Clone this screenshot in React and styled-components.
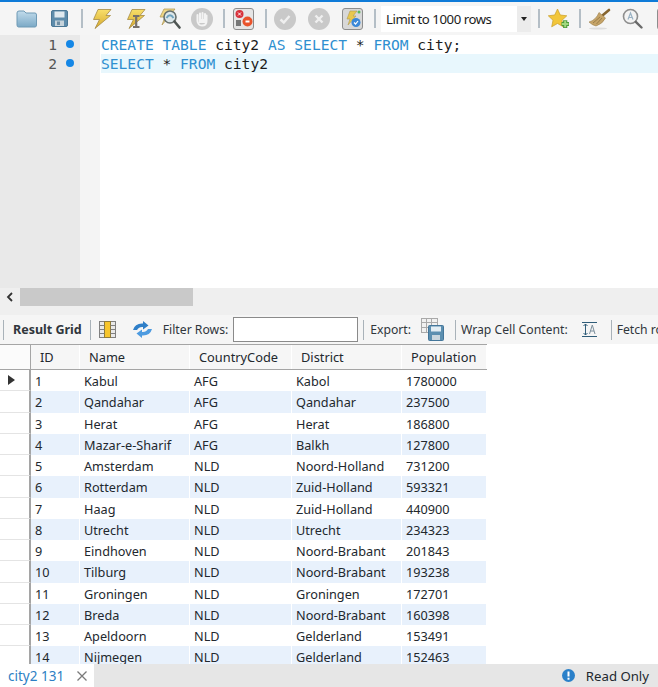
import React from "react";
import styled, { createGlobalStyle } from "styled-components";

const GlobalStyle = createGlobalStyle`
  html, body {
    margin: 0;
    padding: 0;
    background: #ffffff;
  }
`;

const uiFont = `"Noto Sans", "DejaVu Sans", sans-serif`;

const Page = styled.div`
  width: 658px;
  height: 687px;
  display: flex;
  flex-direction: column;
  overflow: hidden;
  font-family: ${uiFont};
  font-size: 13px;
  color: #1c1c1c;
`;

const TopToolbar = styled.div`
  height: 33px;
  flex: none;
  display: flex;
  align-items: center;
  padding-left: 16px;
  background: #f5f5f5;
  border-top: 2px solid #0f7bd8;
  overflow: hidden;
`;

const Slot = styled.span`
  flex: none;
  display: flex;
  margin-left: ${(p) => p.$left || 0}px;
`;

const ToolSep = styled.span`
  flex: none;
  width: 2px;
  height: 19px;
  margin-left: ${(p) => p.$left || 0}px;
  background: #b4bec6;
`;

const LimitSelect = styled.div`
  flex: none;
  width: 150px;
  height: 26px;
  margin-left: 5px;
  display: flex;
  align-items: center;
  justify-content: space-between;
  background: #ffffff;
  font-size: 13.2px;
  letter-spacing: -0.45px;
  padding-left: 5px;
  box-sizing: border-box;
`;

const SelectArrow = styled.span`
  width: 14px;
  height: 100%;
  display: flex;
  align-items: center;
  justify-content: center;
  background: #ececec;
  &::after {
    content: "";
    border-left: 3.5px solid transparent;
    border-right: 3.5px solid transparent;
    border-top: 4px solid #222;
  }
`;

const Editor = styled.div`
  height: 253px;
  flex: none;
  display: flex;
  background: #ffffff;
`;

const Gutter = styled.div`
  width: 80px;
  flex: none;
  background: #e9e9e9;
`;

const LineNumber = styled.div`
  height: 19px;
  display: flex;
  align-items: center;
  justify-content: flex-end;
  gap: 9px;
  padding-right: 6px;
  font-family: "DejaVu Sans Mono", monospace;
  font-size: 14.6px;
  color: #555;
`;

const Marker = styled.span`
  width: 8px;
  height: 8px;
  border-radius: 50%;
  background: #1587e6;
  position: relative;
  top: -1px;
`;

const FoldMargin = styled.div`
  width: 20px;
  flex: none;
  background-color: #f4f4f4;
`;

const Code = styled.div`
  flex: 1;
  padding-left: 1px;
`;

const CodeLine = styled.div`
  height: 19px;
  line-height: 19px;
  font-family: "DejaVu Sans Mono", monospace;
  font-size: 14.6px;
  white-space: pre;
  color: #1c1c1c;
  background: ${(p) => (p.$current ? "#e8f7fd" : "transparent")};
`;

const Keyword = styled.span`
  color: #2f8fd0;
`;

const ScrollArea = styled.div`
  height: 27px;
  flex: none;
  background: #efefef;
`;

const ScrollTrack = styled.div`
  height: 18px;
  display: flex;
  align-items: stretch;
`;

const ScrollButton = styled.span`
  width: 20px;
  display: flex;
  align-items: center;
  justify-content: center;
`;

const ScrollThumb = styled.span`
  width: 173px;
  background: #c9c9c9;
`;

const ResultToolbar = styled.div`
  height: 29px;
  flex: none;
  display: flex;
  align-items: center;
  background: #f5f5f5;
  white-space: nowrap;
  overflow: hidden;
`;

const BarSep = styled.span`
  flex: none;
  width: 1px;
  height: 20px;
  margin-left: ${(p) => p.$left || 0}px;
  background: #a9b2b9;
`;

const BarLabel = styled.span`
  flex: none;
  margin-left: ${(p) => p.$left || 0}px;
  font-size: ${(p) => (p.$bold ? 12.5 : 12.2)}px;
  font-weight: ${(p) => (p.$bold ? 700 : 400)};
  color: #30363c;
`;

const FilterInput = styled.span`
  flex: none;
  width: 123px;
  height: 23px;
  margin-left: 5px;
  background: #ffffff;
  border: 1px solid #8a8a8a;
`;

const Results = styled.div`
  flex: 1;
  min-height: 0;
  overflow: hidden;
  display: grid;
  grid-template-columns: 31px 456px;
  grid-template-rows: 26px;
  grid-auto-rows: 21.25px;
  justify-content: start;
`;

const Corner = styled.div`
  border-top: 1px solid #a5a5a5;
  border-bottom: 1px solid #a5a5a5;
  border-right: 1px solid #a5a5a5;
  box-sizing: border-box;
  background: #fbfbfb;
`;

const RowHead = styled.div`
  box-sizing: border-box;
  border-right: 2px solid #a5a5a5;
  border-bottom: 1px solid #e4e4e4;
  display: flex;
  align-items: center;
  padding-left: 8px;
  background: #ffffff;
`;

const CurrentArrow = styled.span`
  border-left: 7px solid #333;
  border-top: 5.5px solid transparent;
  border-bottom: 5.5px solid transparent;
`;

const Columns = styled.div`
  width: 456px;
  display: grid;
  grid-template-columns: 49px 110px 102px 110px 85px;
  align-items: stretch;
`;

const HeadRow = styled(Columns)`
  box-sizing: border-box;
  border-top: 1px solid #a5a5a5;
  border-bottom: 1px solid #a5a5a5;
  background: #f6f6f6;
`;

const HeadCell = styled.div`
  display: flex;
  align-items: center;
  padding-left: 9px;
  border-right: 1px solid #ffffff;
  font-size: 12.8px;
  color: #22282e;
`;

const DataRow = styled(Columns)`
  line-height: 22.5px;
`;

const DataCell = styled.div`
  padding-left: 4px;
  border-right: 1px solid #ffffff;
  white-space: nowrap;
  overflow: hidden;
  font-size: 12.7px;
  color: #22282e;
  background: ${(p) => (p.$odd ? "#e8f1fc" : "#ffffff")};
`;

const TabBar = styled.div`
  height: 23px;
  flex: none;
  display: flex;
  align-items: center;
  background: #e6e6e6;
`;

const Tab = styled.div`
  width: 94px;
  height: 100%;
  box-sizing: border-box;
  padding-left: 8px;
  display: flex;
  align-items: center;
  gap: 13px;
  background: #ffffff;
  font-size: 13.5px;
  color: #2d7fc4;
`;

const ReadOnly = styled.div`
  margin-left: auto;
  padding-right: 9px;
  display: flex;
  align-items: center;
  gap: 11px;
  font-size: 13.2px;
  color: #22282e;
`;

const Bolt = ({ id }) => (
  <>
    <defs>
      <linearGradient id={id} x1="0" y1="0" x2="0" y2="1">
        <stop offset="0" stopColor="#f8df6a" />
        <stop offset="1" stopColor="#d6a92c" />
      </linearGradient>
    </defs>
    <path d="M6 0.500 L19 0.500 L14 6.500 L18.500 6.500 L3 19.500 L7.500 10.500 L1.500 10.500 Z" fill={`url(#${id})`} stroke="#a58a45" strokeWidth="0.8" />
  </>
);

const Folder = () => (
  <svg width="21" height="18" viewBox="0 0 21 18">
    <defs>
      <linearGradient id="fold" x1="0" y1="0" x2="0" y2="1">
        <stop offset="0" stopColor="#c2dcec" />
        <stop offset="1" stopColor="#7ba9c6" />
      </linearGradient>
    </defs>
    <path d="M1 3 Q1 1 3 1 L8 1 L10 3 L19 3 Q20.500 3 20.500 5 L20.500 15 Q20.500 17 19 17 L2.500 17 Q1 17 1 15 Z" fill="url(#fold)" stroke="#6f9ab5" />
  </svg>
);

const Save = () => (
  <svg width="17" height="17" viewBox="0 0 17 17">
    <rect x="0.500" y="0.500" width="16" height="16" rx="1.500" fill="#5e8cab" stroke="#4a7795" />
    <rect x="3.500" y="1.500" width="10" height="6" fill="#dfe9ef" />
    <rect x="4" y="10.500" width="9" height="5.500" fill="#c6d3db" />
    <rect x="6" y="11.500" width="3" height="3.500" fill="#6f8ea3" />
  </svg>
);

const RunAll = () => (
  <svg width="20" height="20" viewBox="0 0 20 20">
    <Bolt id="bolt-a" />
  </svg>
);

const RunLine = () => (
  <svg width="20" height="20" viewBox="0 0 20 20">
    <Bolt id="bolt-b" />
    <path d="M7 7 H13.500 M10.200 7 V18 M7 18 H13.500" stroke="#77706a" strokeWidth="2.200" fill="none" />
  </svg>
);

const Explain = () => (
  <svg width="23" height="22" viewBox="0 0 23 22">
    <path d="M6 1 L17 1 L13 6 L4 17 L7 9 L2 9 Z" fill="#efd785" stroke="#b39c58" strokeWidth="0.8" />
    <circle cx="12" cy="9" r="6" fill="#dce7ea" stroke="#66706f" strokeWidth="1.600" />
    <path d="M8.500 10 Q12 4.500 15.500 10" stroke="#6fa2bd" strokeWidth="2" fill="none" />
    <path d="M16.500 13.500 L21.500 19.500" stroke="#4f5654" strokeWidth="2.600" strokeLinecap="round" />
  </svg>
);

const Hand = () => (
  <svg width="22" height="22" viewBox="0 0 22 22">
    <circle cx="11" cy="11" r="11" fill="#c9c9c9" />
    <path d="M6.500 9.500 V13 Q7 17.500 11 17.500 Q15.500 17.500 15.500 13 V7.500 M6.500 9.500 V7 M9 11 V5.500 M11.500 11 V5 M14 11 V6" stroke="#f3f3f3" strokeWidth="2" strokeLinecap="round" fill="none" />
    <path d="M8 11 H15 V15 H8 Z" fill="#f3f3f3" />
  </svg>
);

const StopBox = () => (
  <svg width="21" height="22" viewBox="0 0 21 22">
    <rect x="0.500" y="0.500" width="20" height="21" rx="2.500" fill="#e5e5e5" stroke="#8d8d8d" />
    <circle cx="6.500" cy="6" r="4" fill="#d8303a" />
    <path d="M5 4.500 L8 7.500 M8 4.500 L5 7.500" stroke="#fff" strokeWidth="1" />
    <rect x="3" y="12" width="5" height="6" fill="#777" />
    <circle cx="14.500" cy="13.500" r="5" fill="#e9532b" />
    <rect x="12.500" y="12.500" width="4" height="2" fill="#fff" />
  </svg>
);

const CheckCircle = () => (
  <svg width="22" height="22" viewBox="0 0 22 22">
    <circle cx="11" cy="11" r="11" fill="#c9c9c9" />
    <path d="M6.500 11.500 L9.800 14.500 L15.500 8" stroke="#efefef" strokeWidth="2.400" fill="none" />
  </svg>
);

const CrossCircle = () => (
  <svg width="22" height="22" viewBox="0 0 22 22">
    <circle cx="11" cy="11" r="11" fill="#c9c9c9" />
    <path d="M7.500 7.500 L14.500 14.500 M14.500 7.500 L7.500 14.500" stroke="#efefef" strokeWidth="2.400" />
  </svg>
);

const AutoCommit = () => (
  <svg width="21" height="22" viewBox="0 0 21 22">
    <rect x="0.500" y="0.500" width="20" height="21" rx="2.500" fill="#d8d8d8" stroke="#8d8d8d" />
    <path d="M8 3 L15 3 L11 8 L14 8 L6 17 L8 11 L5 11 Z" fill="#e9c84e" stroke="#b09a50" strokeWidth="0.600" />
    <circle cx="14" cy="14.500" r="4.500" fill="#3b88d8" />
    <path d="M12 14.500 L13.600 16 L16 13" stroke="#fff" strokeWidth="1.200" fill="none" />
    <circle cx="17" cy="4" r="1.500" fill="#5cb85c" />
  </svg>
);

const Star = () => (
  <svg width="22" height="22" viewBox="0 0 22 22">
    <path d="M9.500 1 L12.300 7 L18.800 7.800 L14 12.300 L15.300 18.800 L9.500 15.500 L3.700 18.800 L5 12.300 L0.300 7.800 L6.700 7 Z" fill="#f2c63a" stroke="#c99e27" strokeWidth="0.700" />
    <path d="M13.500 16 H21 M17.200 12.200 V20" stroke="#4e9c3c" strokeWidth="4.200" />
    <path d="M14 16 H20.500 M17.200 12.800 V19.300" stroke="#a2d87f" strokeWidth="2" />
  </svg>
);

const Broom = () => (
  <svg width="23" height="22" viewBox="0 0 23 22">
    <path d="M15 7 L21 2" stroke="#86652f" strokeWidth="2.600" strokeLinecap="round" />
    <path d="M11 4.500 L17.500 10 Q14.500 16 8 18 Q4 17 1 14 Q8 12 11 4.500 Z" fill="#c6a468" stroke="#9b7f4b" strokeWidth="0.600" />
    <path d="M5 15 L12 9 M8.500 16 L14 10" stroke="#8f7443" strokeWidth="0.800" />
    <ellipse cx="10" cy="20.500" rx="9" ry="1" fill="#dddddd" />
  </svg>
);

const FindIcon = () => (
  <svg width="21" height="21" viewBox="0 0 21 21">
    <circle cx="8.500" cy="8.500" r="7" fill="#f3f3f3" stroke="#8e8e8e" strokeWidth="1.600" />
    <path d="M6 11.500 L8.500 5 L11 11.500 M7 9.500 H10" stroke="#9ab2c4" strokeWidth="1.200" fill="none" />
    <path d="M13.800 13.800 L19.500 19.500" stroke="#6a6a6a" strokeWidth="2.400" strokeLinecap="round" />
  </svg>
);

const EdgeBox = () => (
  <svg width="21" height="22" viewBox="0 0 21 22">
    <rect x="0.500" y="0.500" width="20" height="21" rx="2.500" fill="#e5e5e5" stroke="#8d8d8d" />
  </svg>
);

const GridIcon = () => (
  <svg width="17" height="17" viewBox="0 0 17 17">
    <rect x="0.500" y="0.500" width="16" height="16" fill="#e9e9e9" stroke="#808080" />
    <rect x="5.500" y="0.500" width="6" height="16" fill="#f7c52b" stroke="#8f7b3a" />
    <path d="M0.500 4.500 H5.500 M0.500 8.500 H5.500 M0.500 12.500 H5.500 M11.500 4.500 H16.500 M11.500 8.500 H16.500 M11.500 12.500 H16.500" stroke="#808080" />
  </svg>
);

const RefreshIcon = () => (
  <svg width="21" height="17" viewBox="0 0 21 17">
    <path d="M1 9 Q3 2 11 2.500 L11 0 L16.500 4.500 L11 8.500 L11 6 Q7 5.500 5 9 Z" fill="#2f7fc8" />
    <path d="M20 8 Q18 15 10 14.500 L10 17 L4.500 12.500 L10 8.500 L10 11 Q14 11.500 16 8 Z" fill="#4d9be0" />
  </svg>
);

const ExportIcon = () => (
  <svg width="23" height="23" viewBox="0 0 23 23">
    <rect x="0.500" y="0.500" width="16" height="14" fill="#f1f1f1" stroke="#a9a9a9" />
    <path d="M0.500 4.500 H16.500 M0.500 9.500 H16.500 M5.500 0.500 V14.500 M10.500 0.500 V14.500" stroke="#a9a9a9" />
    <rect x="7.500" y="7.500" width="15" height="15" rx="1" fill="#5c8fb0" stroke="#44769a" />
    <rect x="10" y="8.500" width="10" height="5" fill="#e3edf3" />
    <rect x="11" y="17" width="8" height="5" fill="#c9d6de" />
  </svg>
);

const WrapIcon = () => (
  <svg width="15" height="15" viewBox="0 0 15 15">
    <path d="M0 0.500 H15 M0 14.500 H15" stroke="#2f5c78" />
    <path d="M3.500 2 V13 M1.500 4 L3.500 2 L5.500 4 M1.500 11 L3.500 13 L5.500 11" stroke="#2f5c78" fill="none" />
    <path d="M7.500 12 L10.300 3 L13 12 M8.500 9 H12" stroke="#7c8f9c" fill="none" />
  </svg>
);

const CloseIcon = () => (
  <svg width="10" height="10" viewBox="0 0 10 10">
    <path d="M0.500 0.500 L9.500 9.500 M9.500 0.500 L0.500 9.500" stroke="#7a7a7a" strokeWidth="1.300" />
  </svg>
);

const InfoIcon = () => (
  <svg width="13" height="13" viewBox="0 0 13 13">
    <circle cx="6.500" cy="6.500" r="6.500" fill="#2a80c9" />
    <rect x="5.500" y="2.500" width="2" height="5" fill="#fff" />
    <rect x="5.500" y="8.700" width="2" height="2" fill="#fff" />
  </svg>
);

const ChevronLeft = () => (
  <svg width="8" height="10" viewBox="0 0 8 10">
    <path d="M6 1 L2 5 L6 9" stroke="#333" strokeWidth="1.800" fill="none" />
  </svg>
);

const cities = [
  [1, "Kabul", "AFG", "Kabol", 1780000],
  [2, "Qandahar", "AFG", "Qandahar", 237500],
  [3, "Herat", "AFG", "Herat", 186800],
  [4, "Mazar-e-Sharif", "AFG", "Balkh", 127800],
  [5, "Amsterdam", "NLD", "Noord-Holland", 731200],
  [6, "Rotterdam", "NLD", "Zuid-Holland", 593321],
  [7, "Haag", "NLD", "Zuid-Holland", 440900],
  [8, "Utrecht", "NLD", "Utrecht", 234323],
  [9, "Eindhoven", "NLD", "Noord-Brabant", 201843],
  [10, "Tilburg", "NLD", "Noord-Brabant", 193238],
  [11, "Groningen", "NLD", "Groningen", 172701],
  [12, "Breda", "NLD", "Noord-Brabant", 160398],
  [13, "Apeldoorn", "NLD", "Gelderland", 153491],
  [14, "Nijmegen", "NLD", "Gelderland", 152463],
];

const headers = ["ID", "Name", "CountryCode", "District", "Population"];

export default function App() {
  return (
    <Page>
      <GlobalStyle />
      <TopToolbar>
        <Slot><Folder /></Slot>
        <Slot $left={14}><Save /></Slot>
        <ToolSep $left={13} />
        <Slot $left={9}><RunAll /></Slot>
        <Slot $left={14}><RunLine /></Slot>
        <Slot $left={12}><Explain /></Slot>
        <Slot $left={10}><Hand /></Slot>
        <ToolSep $left={10} />
        <Slot $left={8}><StopBox /></Slot>
        <ToolSep $left={11} />
        <Slot $left={7}><CheckCircle /></Slot>
        <Slot $left={12}><CrossCircle /></Slot>
        <Slot $left={12}><AutoCommit /></Slot>
        <ToolSep $left={11} />
        <LimitSelect>
          Limit to 1000 rows
          <SelectArrow />
        </LimitSelect>
        <ToolSep $left={7} />
        <Slot $left={8}><Star /></Slot>
        <ToolSep $left={9} />
        <Slot $left={7}><Broom /></Slot>
        <Slot $left={11}><FindIcon /></Slot>
        <Slot $left={14}><EdgeBox /></Slot>
      </TopToolbar>

      <Editor>
        <Gutter>
          <LineNumber>1<Marker /></LineNumber>
          <LineNumber>2<Marker /></LineNumber>
        </Gutter>
        <FoldMargin />
        <Code>
          <CodeLine>
            <Keyword>CREATE TABLE</Keyword> city2 <Keyword>AS SELECT</Keyword> * <Keyword>FROM</Keyword> city;
          </CodeLine>
          <CodeLine $current>
            <Keyword>SELECT</Keyword> * <Keyword>FROM</Keyword> city2
          </CodeLine>
        </Code>
      </Editor>

      <ScrollArea>
        <ScrollTrack>
          <ScrollButton><ChevronLeft /></ScrollButton>
          <ScrollThumb />
        </ScrollTrack>
      </ScrollArea>

      <ResultToolbar>
        <BarSep $left={3} />
        <BarLabel $bold $left={9}>Result Grid</BarLabel>
        <BarSep $left={8} />
        <Slot $left={8}><GridIcon /></Slot>
        <Slot $left={16}><RefreshIcon /></Slot>
        <BarLabel $left={10}>Filter Rows:</BarLabel>
        <FilterInput />
        <BarSep $left={5} />
        <BarLabel $left={6}>Export:</BarLabel>
        <Slot $left={10}><ExportIcon /></Slot>
        <BarSep $left={11} />
        <BarLabel $left={5}>Wrap Cell Content:</BarLabel>
        <Slot $left={14}><WrapIcon /></Slot>
        <BarSep $left={14} />
        <BarLabel $left={5}>Fetch rows:</BarLabel>
      </ResultToolbar>

      <Results>
        <Corner />
        <HeadRow>
          {headers.map((h) => (
            <HeadCell key={h}>{h}</HeadCell>
          ))}
        </HeadRow>
        {cities.map((row, i) => (
          <React.Fragment key={row[0]}>
            <RowHead>{i === 0 && <CurrentArrow />}</RowHead>
            <DataRow>
              {row.map((value, j) => (
                <DataCell key={j} $odd={i % 2 === 1}>{value}</DataCell>
              ))}
            </DataRow>
          </React.Fragment>
        ))}
      </Results>

      <TabBar>
        <Tab>
          city2 131
          <CloseIcon />
        </Tab>
        <ReadOnly>
          <InfoIcon />
          Read Only
        </ReadOnly>
      </TabBar>
    </Page>
  );
}
